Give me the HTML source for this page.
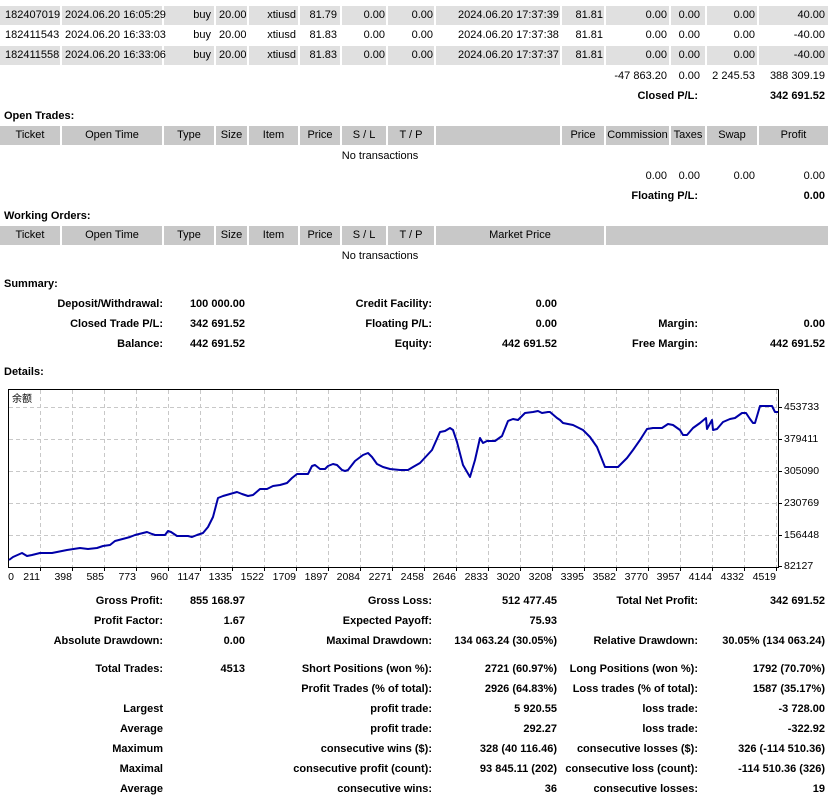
<!DOCTYPE html>
<html><head><meta charset="utf-8"><style>
body{margin:0;width:832px;height:800px;background:#fff;position:relative;overflow:hidden;font-family:"Liberation Sans","Noto Sans CJK SC",sans-serif;font-size:11px;color:#000}
.c{position:absolute;height:19px;line-height:19px;white-space:nowrap}
.g{background:#e0e0e0}.h{background:#c8c8c8;text-align:center}
.t{position:absolute;height:20px;line-height:20px;white-space:nowrap}
.r{text-align:right}.b{font-weight:bold}
</style></head><body>

<!-- row 1 -->
<div class="c g" style="top:6px;left:0;width:60px"></div><div class="c g" style="top:6px;left:62px;width:100px"></div><div class="c g" style="top:6px;left:164px;width:50px"></div><div class="c g" style="top:6px;left:216px;width:31px"></div><div class="c g" style="top:6px;left:249px;width:49px"></div><div class="c g" style="top:6px;left:300px;width:40px"></div><div class="c g" style="top:6px;left:342px;width:44px"></div><div class="c g" style="top:6px;left:388px;width:46px"></div><div class="c g" style="top:6px;left:436px;width:124px"></div><div class="c g" style="top:6px;left:562px;width:42px"></div><div class="c g" style="top:6px;left:606px;width:63px"></div><div class="c g" style="top:6px;left:671px;width:34px"></div><div class="c g" style="top:6px;left:707px;width:50px"></div><div class="c g" style="top:6px;left:759px;width:69px"></div>
<!-- row 3 -->
<div class="c g" style="top:46px;left:0;width:60px"></div><div class="c g" style="top:46px;left:62px;width:100px"></div><div class="c g" style="top:46px;left:164px;width:50px"></div><div class="c g" style="top:46px;left:216px;width:31px"></div><div class="c g" style="top:46px;left:249px;width:49px"></div><div class="c g" style="top:46px;left:300px;width:40px"></div><div class="c g" style="top:46px;left:342px;width:44px"></div><div class="c g" style="top:46px;left:388px;width:46px"></div><div class="c g" style="top:46px;left:436px;width:124px"></div><div class="c g" style="top:46px;left:562px;width:42px"></div><div class="c g" style="top:46px;left:606px;width:63px"></div><div class="c g" style="top:46px;left:671px;width:34px"></div><div class="c g" style="top:46px;left:707px;width:50px"></div><div class="c g" style="top:46px;left:759px;width:69px"></div>

<div class="t" style="top:5px;left:5px">182407019</div><div class="t" style="top:5px;left:65px">2024.06.20 16:05:29</div><div class="t r" style="top:5px;right:621px">buy</div><div class="t" style="top:5px;left:219px">20.00</div><div class="t r" style="top:5px;right:536px">xtiusd</div><div class="t r" style="top:5px;right:495px">81.79</div><div class="t r" style="top:5px;right:447px">0.00</div><div class="t r" style="top:5px;right:399px">0.00</div><div class="t" style="top:5px;left:458px">2024.06.20 17:37:39</div><div class="t r" style="top:5px;right:229px">81.81</div><div class="t r" style="top:5px;right:165px">0.00</div><div class="t r" style="top:5px;right:132px">0.00</div><div class="t r" style="top:5px;right:77px">0.00</div><div class="t r" style="top:5px;right:7px">40.00</div>
<div class="t" style="top:25px;left:5px">182411543</div><div class="t" style="top:25px;left:65px">2024.06.20 16:33:03</div><div class="t r" style="top:25px;right:621px">buy</div><div class="t" style="top:25px;left:219px">20.00</div><div class="t r" style="top:25px;right:536px">xtiusd</div><div class="t r" style="top:25px;right:495px">81.83</div><div class="t r" style="top:25px;right:447px">0.00</div><div class="t r" style="top:25px;right:399px">0.00</div><div class="t" style="top:25px;left:458px">2024.06.20 17:37:38</div><div class="t r" style="top:25px;right:229px">81.81</div><div class="t r" style="top:25px;right:165px">0.00</div><div class="t r" style="top:25px;right:132px">0.00</div><div class="t r" style="top:25px;right:77px">0.00</div><div class="t r" style="top:25px;right:7px">-40.00</div>
<div class="t" style="top:45px;left:5px">182411558</div><div class="t" style="top:45px;left:65px">2024.06.20 16:33:06</div><div class="t r" style="top:45px;right:621px">buy</div><div class="t" style="top:45px;left:219px">20.00</div><div class="t r" style="top:45px;right:536px">xtiusd</div><div class="t r" style="top:45px;right:495px">81.83</div><div class="t r" style="top:45px;right:447px">0.00</div><div class="t r" style="top:45px;right:399px">0.00</div><div class="t" style="top:45px;left:458px">2024.06.20 17:37:37</div><div class="t r" style="top:45px;right:229px">81.81</div><div class="t r" style="top:45px;right:165px">0.00</div><div class="t r" style="top:45px;right:132px">0.00</div><div class="t r" style="top:45px;right:77px">0.00</div><div class="t r" style="top:45px;right:7px">-40.00</div>

<div class="t r" style="top:66px;right:165px">-47 863.20</div><div class="t r" style="top:66px;right:132px">0.00</div><div class="t r" style="top:66px;right:77px">2 245.53</div><div class="t r" style="top:66px;right:7px">388 309.19</div>
<div class="t r b" style="top:86px;right:134px">Closed P/L:</div><div class="t r b" style="top:86px;right:7px">342 691.52</div>

<div class="t b" style="top:106px;left:4px">Open Trades:</div>
<div class="c h" style="top:126px;left:0;width:60px">Ticket</div><div class="c h" style="top:126px;left:62px;width:100px">Open Time</div><div class="c h" style="top:126px;left:164px;width:50px">Type</div><div class="c h" style="top:126px;left:216px;width:31px">Size</div><div class="c h" style="top:126px;left:249px;width:49px">Item</div><div class="c h" style="top:126px;left:300px;width:40px">Price</div><div class="c h" style="top:126px;left:342px;width:44px">S / L</div><div class="c h" style="top:126px;left:388px;width:46px">T / P</div><div class="c h" style="top:126px;left:436px;width:124px"></div><div class="c h" style="top:126px;left:562px;width:42px">Price</div><div class="c h" style="top:126px;left:606px;width:63px">Commission</div><div class="c h" style="top:126px;left:671px;width:34px">Taxes</div><div class="c h" style="top:126px;left:707px;width:50px">Swap</div><div class="c h" style="top:126px;left:759px;width:69px">Profit</div>
<div class="t" style="top:146px;left:0;width:760px;text-align:center">No transactions</div>
<div class="t r" style="top:166px;right:165px">0.00</div><div class="t r" style="top:166px;right:132px">0.00</div><div class="t r" style="top:166px;right:77px">0.00</div><div class="t r" style="top:166px;right:7px">0.00</div>
<div class="t r b" style="top:186px;right:134px">Floating P/L:</div><div class="t r b" style="top:186px;right:7px">0.00</div>

<div class="t b" style="top:206px;left:4px">Working Orders:</div>
<div class="c h" style="top:226px;left:0;width:60px">Ticket</div><div class="c h" style="top:226px;left:62px;width:100px">Open Time</div><div class="c h" style="top:226px;left:164px;width:50px">Type</div><div class="c h" style="top:226px;left:216px;width:31px">Size</div><div class="c h" style="top:226px;left:249px;width:49px">Item</div><div class="c h" style="top:226px;left:300px;width:40px">Price</div><div class="c h" style="top:226px;left:342px;width:44px">S / L</div><div class="c h" style="top:226px;left:388px;width:46px">T / P</div><div class="c h" style="top:226px;left:436px;width:168px">Market Price</div><div class="c h" style="top:226px;left:606px;width:222px"></div>
<div class="t" style="top:246px;left:0;width:760px;text-align:center">No transactions</div>

<div class="t b" style="top:274px;left:4px">Summary:</div>
<div class="t r b" style="top:294px;right:669px">Deposit/Withdrawal:</div><div class="t r b" style="top:294px;right:587px">100 000.00</div><div class="t r b" style="top:294px;right:400px">Credit Facility:</div><div class="t r b" style="top:294px;right:275px">0.00</div>
<div class="t r b" style="top:314px;right:669px">Closed Trade P/L:</div><div class="t r b" style="top:314px;right:587px">342 691.52</div><div class="t r b" style="top:314px;right:400px">Floating P/L:</div><div class="t r b" style="top:314px;right:275px">0.00</div><div class="t r b" style="top:314px;right:134px">Margin:</div><div class="t r b" style="top:314px;right:7px">0.00</div>
<div class="t r b" style="top:334px;right:669px">Balance:</div><div class="t r b" style="top:334px;right:587px">442 691.52</div><div class="t r b" style="top:334px;right:400px">Equity:</div><div class="t r b" style="top:334px;right:275px">442 691.52</div><div class="t r b" style="top:334px;right:134px">Free Margin:</div><div class="t r b" style="top:334px;right:7px">442 691.52</div>
<div class="t b" style="top:362px;left:4px">Details:</div>

<svg style="position:absolute;left:0;top:0" width="832" height="800" font-family="Liberation Sans, sans-serif" font-size="10.5">
<g stroke="#c8c8c8" stroke-dasharray="4,3" stroke-width="1">
<path d="M40.5 390V567M72.5 390V567M104.5 390V567M136.5 390V567M168.5 390V567M200.5 390V567M232.5 390V567M264.5 390V567M296.5 390V567M328.5 390V567M360.5 390V567M392.5 390V567M424.5 390V567M456.5 390V567M488.5 390V567M520.5 390V567M552.5 390V567M584.5 390V567M616.5 390V567M648.5 390V567M680.5 390V567M712.5 390V567M744.5 390V567M776.5 390V567"/>
<path d="M9 407.5H778M9 439.5H778M9 471.5H778M9 503.5H778M9 535.5H778"/>
</g>
<rect x="8.5" y="389.5" width="770" height="178" fill="none" stroke="#000"/>
<path d="M779 407.5h3M779 439.5h3M779 471.5h3M779 503.5h3M779 535.5h3M779 566.5h3M40.5 568v3M72.5 568v3M104.5 568v3M136.5 568v3M168.5 568v3M200.5 568v3M232.5 568v3M264.5 568v3M296.5 568v3M328.5 568v3M360.5 568v3M392.5 568v3M424.5 568v3M456.5 568v3M488.5 568v3M520.5 568v3M552.5 568v3M584.5 568v3M616.5 568v3M648.5 568v3M680.5 568v3M712.5 568v3M744.5 568v3M776.5 568v3" stroke="#000"/>
<text x="12" y="402" font-size="10" font-family="Noto Sans CJK SC, sans-serif">余额</text>
<polyline fill="none" stroke="#0000a8" stroke-width="2" stroke-linejoin="round" points="9,560 13,557 22,553 27,556 32,555 40,553 52,553 67,550 80,548 88,549 97,548 103,546 110,545 115,541 130,537 135,535 143,533 147,532 152,534 155,535 165,535 168,531 171,532 177,536 188,536 192,537 197,535 203,533 208,527 213,517 218,498 223,496 230,494 237,492 242,494 248,496 253,495 260,489 267,489 273,486 280,485 287,483 292,478 297,474 308,474 312,466 315,465 320,469 325,469 328,466 333,464 337,465 342,470 345,471 348,470 355,461 363,455 368,453 372,457 377,464 383,467 390,469 400,470 408,470 413,467 420,463 432,450 440,432 445,431 450,428 453,430 457,442 463,465 470,477 475,460 480,438 483,443 487,441 495,441 502,436 508,421 513,419 518,420 525,413 533,412 538,411 542,413 548,412 550,412 557,418 560,420 563,423 573,425 583,430 590,437 597,447 605,467 618,467 627,458 633,450 640,440 647,429 653,428 662,428 668,424 673,425 680,430 683,435 687,435 693,428 700,423 706,418 707,429 712,420 713,430 717,429 723,422 730,419 735,418 742,413 746,413 750,419 753,423 755,423 760,406 772,406 775,412 778,412"/>
<g>
<text x="784" y="410">453733</text><text x="784" y="442">379411</text><text x="784" y="474">305090</text><text x="784" y="506">230769</text><text x="784" y="538">156448</text><text x="784" y="569">82127</text>
</g>
<g text-anchor="end">
<text x="14" y="580">0</text><text x="40" y="580">211</text><text x="72" y="580">398</text><text x="104" y="580">585</text><text x="136" y="580">773</text><text x="168" y="580">960</text><text x="200" y="580">1147</text><text x="232" y="580">1335</text><text x="264" y="580">1522</text><text x="296" y="580">1709</text><text x="328" y="580">1897</text><text x="360" y="580">2084</text><text x="392" y="580">2271</text><text x="424" y="580">2458</text><text x="456" y="580">2646</text><text x="488" y="580">2833</text><text x="520" y="580">3020</text><text x="552" y="580">3208</text><text x="584" y="580">3395</text><text x="616" y="580">3582</text><text x="648" y="580">3770</text><text x="680" y="580">3957</text><text x="712" y="580">4144</text><text x="744" y="580">4332</text><text x="776" y="580">4519</text>
</g>
</svg>

<div class="t r b" style="top:591px;right:669px">Gross Profit:</div><div class="t r b" style="top:591px;right:587px">855 168.97</div><div class="t r b" style="top:591px;right:400px">Gross Loss:</div><div class="t r b" style="top:591px;right:275px">512 477.45</div><div class="t r b" style="top:591px;right:134px">Total Net Profit:</div><div class="t r b" style="top:591px;right:7px">342 691.52</div>
<div class="t r b" style="top:611px;right:669px">Profit Factor:</div><div class="t r b" style="top:611px;right:587px">1.67</div><div class="t r b" style="top:611px;right:400px">Expected Payoff:</div><div class="t r b" style="top:611px;right:275px">75.93</div>
<div class="t r b" style="top:631px;right:669px">Absolute Drawdown:</div><div class="t r b" style="top:631px;right:587px">0.00</div><div class="t r b" style="top:631px;right:400px">Maximal Drawdown:</div><div class="t r b" style="top:631px;right:275px">134 063.24 (30.05%)</div><div class="t r b" style="top:631px;right:134px">Relative Drawdown:</div><div class="t r b" style="top:631px;right:7px">30.05% (134 063.24)</div>
<div class="t r b" style="top:659px;right:669px">Total Trades:</div><div class="t r b" style="top:659px;right:587px">4513</div><div class="t r b" style="top:659px;right:400px">Short Positions (won %):</div><div class="t r b" style="top:659px;right:275px">2721 (60.97%)</div><div class="t r b" style="top:659px;right:134px">Long Positions (won %):</div><div class="t r b" style="top:659px;right:7px">1792 (70.70%)</div>
<div class="t r b" style="top:679px;right:400px">Profit Trades (% of total):</div><div class="t r b" style="top:679px;right:275px">2926 (64.83%)</div><div class="t r b" style="top:679px;right:134px">Loss trades (% of total):</div><div class="t r b" style="top:679px;right:7px">1587 (35.17%)</div>
<div class="t r b" style="top:699px;right:669px">Largest</div><div class="t r b" style="top:699px;right:400px">profit trade:</div><div class="t r b" style="top:699px;right:275px">5 920.55</div><div class="t r b" style="top:699px;right:134px">loss trade:</div><div class="t r b" style="top:699px;right:7px">-3 728.00</div>
<div class="t r b" style="top:719px;right:669px">Average</div><div class="t r b" style="top:719px;right:400px">profit trade:</div><div class="t r b" style="top:719px;right:275px">292.27</div><div class="t r b" style="top:719px;right:134px">loss trade:</div><div class="t r b" style="top:719px;right:7px">-322.92</div>
<div class="t r b" style="top:739px;right:669px">Maximum</div><div class="t r b" style="top:739px;right:400px">consecutive wins ($):</div><div class="t r b" style="top:739px;right:275px">328 (40 116.46)</div><div class="t r b" style="top:739px;right:134px">consecutive losses ($):</div><div class="t r b" style="top:739px;right:7px">326 (-114 510.36)</div>
<div class="t r b" style="top:759px;right:669px">Maximal</div><div class="t r b" style="top:759px;right:400px">consecutive profit (count):</div><div class="t r b" style="top:759px;right:275px">93 845.11 (202)</div><div class="t r b" style="top:759px;right:134px">consecutive loss (count):</div><div class="t r b" style="top:759px;right:7px">-114 510.36 (326)</div>
<div class="t r b" style="top:779px;right:669px">Average</div><div class="t r b" style="top:779px;right:400px">consecutive wins:</div><div class="t r b" style="top:779px;right:275px">36</div><div class="t r b" style="top:779px;right:134px">consecutive losses:</div><div class="t r b" style="top:779px;right:7px">19</div>
</body></html>
